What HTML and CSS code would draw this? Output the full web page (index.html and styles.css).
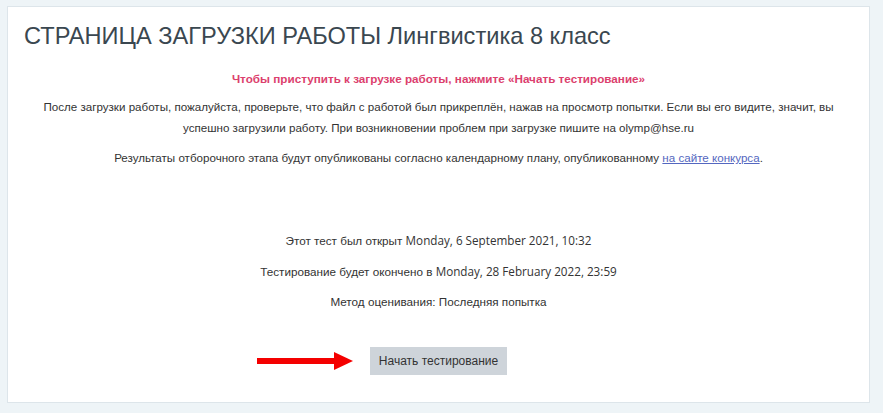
FILE: index.html
```html
<!DOCTYPE html>
<html lang="ru">
<head>
<meta charset="utf-8">
<title>Страница загрузки работы</title>
<link rel="stylesheet" href="styles.css">
</head>
<body>
<div class="page">
  <main class="card">
    <h1 class="title">СТРАНИЦА ЗАГРУЗКИ РАБОТЫ Лингвистика 8 класс</h1>
    <div class="intro">
      <p class="notice">Чтобы приступить к загрузке работы, нажмите «Начать тестирование»</p>
      <p class="text">После загрузки работы, пожалуйста, проверьте, что файл с работой был прикреплён, нажав на просмотр попытки. Если вы его видите, значит, вы успешно загрузили работу. При возникновении проблем при загрузке пишите на olymp@hse.ru</p>
      <p class="text">Результаты отборочного этапа будут опубликованы согласно календарному плану, опубликованному <a href="#" class="link">на сайте конкурса</a>.</p>
    </div>
    <div class="info">
      <p class="info-line">Этот тест был открыт <span class="latin">Monday, 6 September 2021, 10:32</span></p>
      <p class="info-line">Тестирование будет окончено в <span class="latin">Monday, 28 February 2022, 23:59</span></p>
      <p class="info-line">Метод оценивания: Последняя попытка</p>
    </div>
    <div class="actions">
      <svg class="arrow" width="96" height="20" viewBox="0 0 96 20" aria-hidden="true">
        <rect x="0" y="7" width="79" height="6" fill="#f40000"/>
        <polygon points="77,1 96,10 77,19" fill="#f40000"/>
      </svg>
      <button class="btn" type="button">Начать тестирование</button>
    </div>
  </main>
</div>
</body>
</html>
```
FILE: styles.css
```css
html, body {
  margin: 0;
  padding: 0;
}
body {
  background: #eef4f7;
  font-family: "Liberation Sans", Arial, sans-serif;
  color: #333;
  width: 883px;
  height: 413px;
  overflow: hidden;
}
.page {
  padding: 6px 0 0 7px;
}
.card {
  box-sizing: border-box;
  width: 863px;
  height: 397px;
  background: #fff;
  border: 1px solid #dde5ea;
  padding: 11px 16px 0 16px;
}
.title {
  margin: 0;
  font-weight: 400;
  font-size: 23.6px;
  line-height: 36px;
  color: #3a4750;
}
.intro {
  text-align: center;
  margin-top: 15px;
}
.notice {
  margin: 0;
  color: #dc3f6e;
  font-weight: 700;
  font-size: 11.7px;
  line-height: 20px;
}
.text {
  margin: 7px 0 0 0;
  font-size: 11.6px;
  line-height: 21px;
  color: #333;
}
.text + .text {
  margin-top: 9px;
}
.link {
  color: #5467c0;
  text-decoration: underline;
}
.info {
  text-align: center;
  margin-top: 62px;
}
.info-line {
  margin: 0 0 10px 0;
  font-size: 11.7px;
  line-height: 20px;
  color: #333;
}
.latin {
  font-family: "Open Sans", "Liberation Sans", sans-serif;
}
.actions {
  display: flex;
  justify-content: center;
  align-items: center;
  margin-top: 35px;
  position: relative;
}
.arrow {
  position: absolute;
  left: 233px;
  top: 4px;
}
.btn {
  font-family: "Liberation Sans", Arial, sans-serif;
  font-size: 12px;
  color: #333;
  background: #ced4da;
  border: none;
  border-radius: 0;
  width: 137px;
  height: 28px;
  padding: 0;
}
```
